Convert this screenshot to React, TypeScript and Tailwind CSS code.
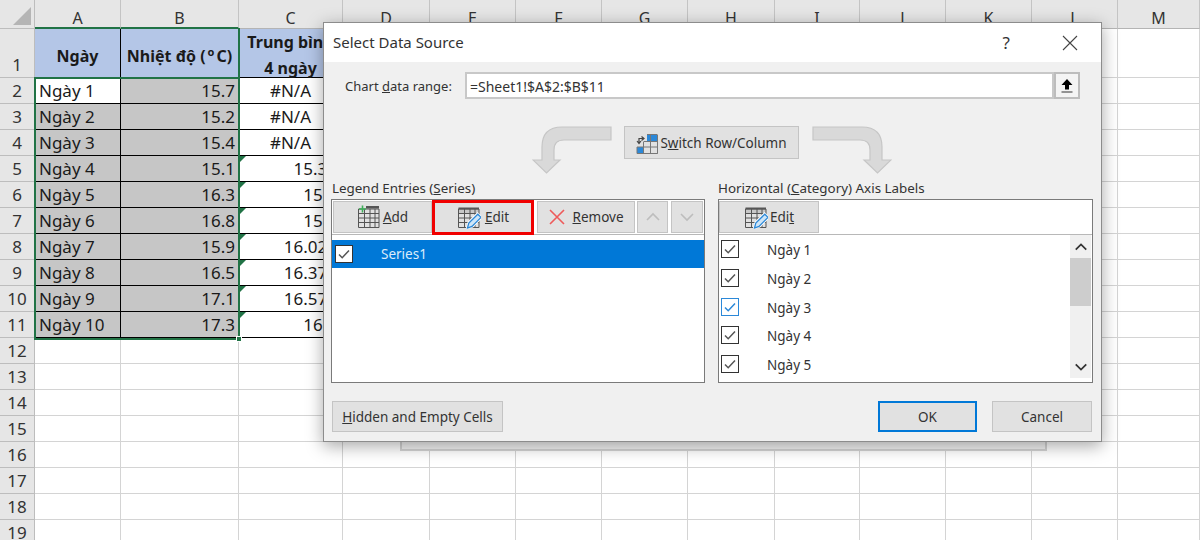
import React from 'react';

const COLS = ['A', 'B', 'C', 'D', 'E', 'F', 'G', 'H', 'I', 'J', 'K', 'L', 'M'];

const DATA: [string, string, string][] = [
  ['Ngày 1', '15.7', '#N/A'],
  ['Ngày 2', '15.2', '#N/A'],
  ['Ngày 3', '15.4', '#N/A'],
  ['Ngày 4', '15.1', '15.35'],
  ['Ngày 5', '16.3', '15.5'],
  ['Ngày 6', '16.8', '15.9'],
  ['Ngày 7', '15.9', '16.025'],
  ['Ngày 8', '16.5', '16.375'],
  ['Ngày 9', '17.1', '16.575'],
  ['Ngày 10', '17.3', '16.7'],
];

const AXIS_LABELS = ['Ngày 1', 'Ngày 2', 'Ngày 3', 'Ngày 4', 'Ngày 5'];

function TableIcon({ pencil, plus }: { pencil?: boolean; plus?: boolean }) {
  return (
    <svg width="24" height="24" viewBox="0 0 24 24" fill="none" className="shrink-0">
      <path d="M2 4.5H22V8H2Z" fill={plus ? 'none' : '#c8c8c8'} />
      <path d="M1.5 4v18.5h20.5V4z M1.5 8.5H22 M1.5 13H22 M1.5 17.5H22 M7.5 4v18.5 M13 4v18.5 M18 4v18.5" stroke="#555" strokeWidth="1" fill="none" />
      {plus && <path d="M5.5 0.5v7 M2 4h7" stroke="#3fae5a" strokeWidth="1.6" />}
      {plus && <rect x="9" y="1" width="13" height="2.5" fill="#555" />}
      {pencil && <path d="M1.5 3.5H22" stroke="#555" strokeWidth="2" />}
      {pencil && (
        <g>
          <path d="M10 23l1.5-5.5L20.5 8.5l4 4-9 9z" fill="#fff" stroke="#fff" strokeWidth="2" />
          <path d="M10.5 23l1.3-5 9-8.8 3.2 3.2-9 9z" fill="#cfe6f8" stroke="#2b88d8" strokeWidth="1.3" />
        </g>
      )}
    </svg>
  );
}

function SwitchIcon() {
  return (
    <svg width="22" height="20" viewBox="0 0 22 20" className="shrink-0">
      <rect x="11" y="1" width="10" height="6" fill="#2b88d8" />
      <rect x="1" y="13" width="6" height="6" fill="#2b88d8" />
      <path d="M8 7.5H21.5V19.5H1V13 M1 13H21.5 M7.5 7.5V19.5 M14.5 1V19.5 M21.5 1V19.5 M11 0.5H21.5" stroke="#777" strokeWidth="1" fill="none" />
      <path d="M3 9V4.5H7 M5.5 2.5L8 4.5 5.5 6.5 M1 7L3 9.5 5 7" stroke="#444" strokeWidth="1.2" fill="none" />
    </svg>
  );
}

function CurvedArrow({ flip }: { flip?: boolean }) {
  return (
    <svg width="80" height="48" viewBox="0 0 80 48" className={flip ? 'shrink-0 -scale-x-100' : 'shrink-0'}>
      <path
        d="M79 1H30Q10 1 10 21V34H1L14.5 47L28 34H22V24Q22 14 32 14H79Z"
        fill="#d9d9d9"
        stroke="#c6c6c6"
        strokeWidth="1.2"
      />
    </svg>
  );
}

function Chevron({ up, color, size = 16, weight = 1.6 }: { up?: boolean; color: string; size?: number; weight?: number }) {
  return (
    <svg width={size} height={size} viewBox="0 0 16 16" fill="none">
      <path d={up ? 'M2 11l6-6 6 6' : 'M2 5l6 6 6-6'} stroke={color} strokeWidth={weight} />
    </svg>
  );
}

function CheckBox({ blue }: { blue?: boolean }) {
  const stroke = blue ? '#2b88d8' : '#555';
  return (
    <span
      className={`flex h-[18px] w-[18px] shrink-0 items-center justify-center border bg-white ${
        blue ? 'border-[#2b88d8]' : 'border-[#333]'
      }`}
    >
      <svg width="14" height="14" viewBox="0 0 14 14" fill="none">
        <path d="M2 7.5l3.2 3.2L12 3.5" stroke={stroke} strokeWidth="1.5" />
      </svg>
    </span>
  );
}

function BlankCells() {
  return (
    <>
      {COLS.slice(3).map((c) => (
        <div key={c} className="border-r border-b border-[#d4d4d4]" />
      ))}
    </>
  );
}

function Sheet() {
  return (
    <div
      className="grid h-[540px] w-[1200px] grid-cols-[35px_86px_118px_104px_87px_86px_86px_86px_87px_85px_86px_86px_86px_82px] grid-rows-[29px_49px_repeat(18,26px)] overflow-hidden bg-white text-[17px] text-[#1a1a1a]"
      style={{ fontFamily: '"Noto Sans", sans-serif' }}
    >
      {/* column headers */}
      <div className="flex items-end justify-end border-r border-b border-[#bdbdbd] bg-[#e6e6e6] pr-[3px] pb-[3px]">
        <div className="h-[18px] w-[18px] bg-[#b5b5b5] [clip-path:polygon(100%_0,100%_100%,0_100%)]" />
      </div>
      {COLS.map((c, i) => (
        <div
          key={c}
          className={`flex items-center justify-center border-r border-[#c4c4c4] bg-[#e6e6e6] pt-[8px] text-[16px] text-[#333] ${
            i < 2 ? 'border-b-2 border-b-[#217346]' : 'border-b border-b-[#b4b4b4]'
          }`}
        >
          {c}
        </div>
      ))}

      {/* row 1 */}
      <div className="flex items-end justify-center border-r border-b border-[#bdbdbd] bg-[#e6e6e6] text-[#333]">1</div>
      <div className="flex items-center justify-center border-r border-b border-black bg-[#b4c6e7] pt-[5px] text-[16px] font-bold">Ngày</div>
      <div className="flex items-center justify-center border-r border-b border-black bg-[#b4c6e7] pt-[5px] text-[16px] font-bold whitespace-nowrap">
        <span>
          Nhiệt độ (<sup className="mx-[2px] text-[11px]">o</sup>C)
        </span>
      </div>
      <div className="flex flex-col items-center justify-center border-r border-b border-black bg-[#b4c6e7] pt-[4px] text-center text-[16px] leading-[26px] font-bold whitespace-nowrap">
        <span>Trung bình</span>
        <span>4 ngày</span>
      </div>
      <BlankCells />

      {/* data rows */}
      {DATA.map((row, r) => (
        <React.Fragment key={r}>
          <div className="flex items-center justify-center border-r border-b border-[#bdbdbd] bg-[#e6e6e6] pt-px text-[#333]">
            {r + 2}
          </div>
          <div className={`flex items-center border-r border-b border-black pt-px pl-[4px] whitespace-nowrap ${r === 0 ? 'bg-white' : 'bg-[#c6c6c6]'}`}>
            {row[0]}
          </div>
          <div className="flex items-center justify-end border-r border-b border-black bg-[#c6c6c6] pt-px pr-[3px]">{row[1]}</div>
          <div className={`relative flex items-center overflow-hidden border-r border-b border-black pt-px whitespace-nowrap ${r < 3 ? 'justify-center' : 'justify-end pr-[5px]'}`}>
            {r >= 3 && (
              <span className="absolute top-0 left-0 h-[7px] w-[7px] bg-[#217346] [clip-path:polygon(0_0,100%_0,0_100%)]" />
            )}
            {row[2]}
          </div>
          <BlankCells />
        </React.Fragment>
      ))}

      {/* empty rows */}
      {Array.from({ length: 8 }, (_, r) => (
        <React.Fragment key={r}>
          <div className="flex items-center justify-center border-r border-b border-[#bdbdbd] bg-[#e6e6e6] pt-px text-[#333]">{r + 12}</div>
          {COLS.map((c) => (
            <div key={c} className="border-r border-b border-[#d4d4d4]" />
          ))}
        </React.Fragment>
      ))}
    </div>
  );
}

function DialogButton({ children, className = '' }: { children: React.ReactNode; className?: string }) {
  return (
    <button className={`flex items-center justify-center border border-[#c4c4c4] bg-[#e1e1e1] text-[#333] ${className}`}>
      {children}
    </button>
  );
}

function Dialog() {
  return (
    <div
      className="absolute top-[22px] left-[323px] flex h-[420px] w-[779px] flex-col border border-[#8c8c8c] bg-[#f0f0f0] text-[13.5px] text-[#333] shadow-[0_4px_16px_rgba(0,0,0,0.35)]"
      style={{ fontFamily: '"Noto Sans", sans-serif' }}
    >
      <div className="flex h-[39px] shrink-0 items-center justify-between bg-white pr-[23px] pl-[9px]">
        <span className="text-[15px]">Select Data Source</span>
        <div className="flex items-center gap-[52px]">
          <span className="text-[17px]">?</span>
          <svg width="16" height="16" viewBox="0 0 16 16" fill="none">
            <path d="M1 1l14 14M15 1L1 15" stroke="#444" strokeWidth="1.1" />
          </svg>
        </div>
      </div>

      <div className="mt-[10px] flex h-[27px] shrink-0 items-center pr-[21px] pl-[21px]">
        <span className="w-[120px] shrink-0 pt-[3px] text-[13px]">
          Chart <u>d</u>ata range:
        </span>
        <div className="flex h-full flex-1 items-center border-2 border-[#c8c8c8] bg-white pt-[2px] pl-[3px] text-[14px]">=Sheet1!$A$2:$B$11</div>
        <div className="flex h-full w-[26px] shrink-0 items-center justify-center border-2 border-[#bdbdbd] bg-[#f4f4f4]">
          <svg width="14" height="16" viewBox="0 0 14 16">
            <path d="M7 1L12.5 7H9V11.5H5V7H1.5Z" fill="#000" />
            <rect x="1.5" y="13.5" width="11" height="1" fill="#333" />
          </svg>
        </div>
      </div>

      <div className="mt-[27px] flex h-[48px] shrink-0 pl-[208px]">
        <CurvedArrow />
        <DialogButton className="ml-[12px] h-[33px] w-[175px] gap-[2px] pt-[2px]">
          <SwitchIcon />
          <span>
            S<u>w</u>itch Row/Column
          </span>
        </DialogButton>
        <div className="ml-[13px]">
          <CurvedArrow flip />
        </div>
      </div>

      <div className="mt-[6px] flex shrink-0 gap-[13px] pl-[7px]">
        {/* legend entries */}
        <div className="flex w-[374px] flex-col">
          <span className="h-[19px] pl-px text-[13.4px] leading-[17px]">
            Legend Entries (<u>S</u>eries)
          </span>
          <div className="flex h-[184px] flex-col border border-[#7a7a7a] bg-white">
            <div className="flex h-[35px] shrink-0 items-center border-b border-[#b8b8b8] pl-px">
              <DialogButton className="h-[32px] w-[99px] gap-[2px]">
                <TableIcon plus />
                <span>
                  <u>A</u>dd
                </span>
              </DialogButton>
              <DialogButton className="h-[35px] w-[102px] gap-[4px] !border-[3px] !border-[#f00000]">
                <TableIcon pencil />
                <span>
                  <u>E</u>dit
                </span>
              </DialogButton>
              <DialogButton className="ml-[3px] h-[32px] w-[98px] gap-[6px]">
                <svg width="18" height="18" viewBox="0 0 18 18" fill="none">
                  <path d="M2 2l14 14M16 2L2 16" stroke="#ee5a5a" strokeWidth="1.6" />
                </svg>
                <span>
                  <u>R</u>emove
                </span>
              </DialogButton>
              <DialogButton className="ml-[2px] h-[32px] w-[31px]">
                <Chevron up color="#bdbdbd" />
              </DialogButton>
              <DialogButton className="ml-[3px] h-[32px] w-[32px]">
                <Chevron color="#bdbdbd" />
              </DialogButton>
            </div>
            <div className="mt-[5px] flex h-[28px] items-center bg-[#0078d7] pl-[3px] text-white">
              <CheckBox />
              <span className="ml-[28px] text-[#dcecfa]">Series1</span>
            </div>
          </div>
        </div>

        {/* axis labels */}
        <div className="flex w-[375px] flex-col">
          <span className="h-[19px] text-[13.4px] leading-[17px]">
            Horizontal (<u>C</u>ategory) Axis Labels
          </span>
          <div className="flex h-[184px] flex-col border border-[#7a7a7a] bg-white">
            <div className="flex h-[35px] shrink-0 items-center border-b border-[#b8b8b8]">
              <DialogButton className="h-[32px] w-[100px] gap-[2px]">
                <TableIcon pencil />
                <span>
                  Edi<u>t</u>
                </span>
              </DialogButton>
            </div>
            <div className="flex min-h-0 flex-1">
              <div className="flex flex-1 flex-col pl-[2px]">
                {AXIS_LABELS.map((label, i) => (
                  <div key={label} className="flex h-[28.7px] items-center">
                    <CheckBox blue={i === 2} />
                    <span className="ml-[28px] pt-[2px]">{label}</span>
                  </div>
                ))}
              </div>
              <div className="mr-px mb-[4px] flex w-[21px] flex-col items-center bg-[#f0f0f0]">
                <div className="flex h-[23px] w-full items-center justify-center">
                  <Chevron up color="#333" size={14} weight={2} />
                </div>
                <div className="h-[48px] w-full bg-[#cdcdcd]" />
                <div className="mt-auto flex h-[23px] w-full items-center justify-center">
                  <Chevron color="#333" size={14} weight={2} />
                </div>
              </div>
            </div>
          </div>
        </div>
      </div>

      <div className="mt-[18px] flex shrink-0 pr-[9px] pl-[8px]">
        <DialogButton className="h-[31px] w-[171px] pt-[2px]">
          <span>
            <u>H</u>idden and Empty Cells
          </span>
        </DialogButton>
        <DialogButton className="ml-auto h-[31px] w-[99px] !border-2 pt-[2px] !border-[#0078d7]">OK</DialogButton>
        <DialogButton className="ml-[15px] h-[31px] w-[100px] pt-[2px]">Cancel</DialogButton>
      </div>
    </div>
  );
}

export default function App() {
  return (
    <div className="relative h-[540px] w-[1200px] overflow-hidden">
      <Sheet />

      {/* selected range outline */}
      <div className="absolute top-[77px] left-[34px] h-[263px] w-[206px] border-2 border-[#217346]" />
      <div className="absolute top-[28px] left-[121px] h-[50px] w-[119px] border-r-2 border-r-[#217346]" />
      <div className="absolute top-[336px] left-[236px] h-[6px] w-[6px] border border-white bg-[#217346]" />

      {/* chart frame behind the dialog */}
      <div className="absolute top-[430px] left-[400px] h-[21px] w-[647px] border-2 border-[#d4d4d4] bg-[#f4f4f4]" />

      <Dialog />
    </div>
  );
}
